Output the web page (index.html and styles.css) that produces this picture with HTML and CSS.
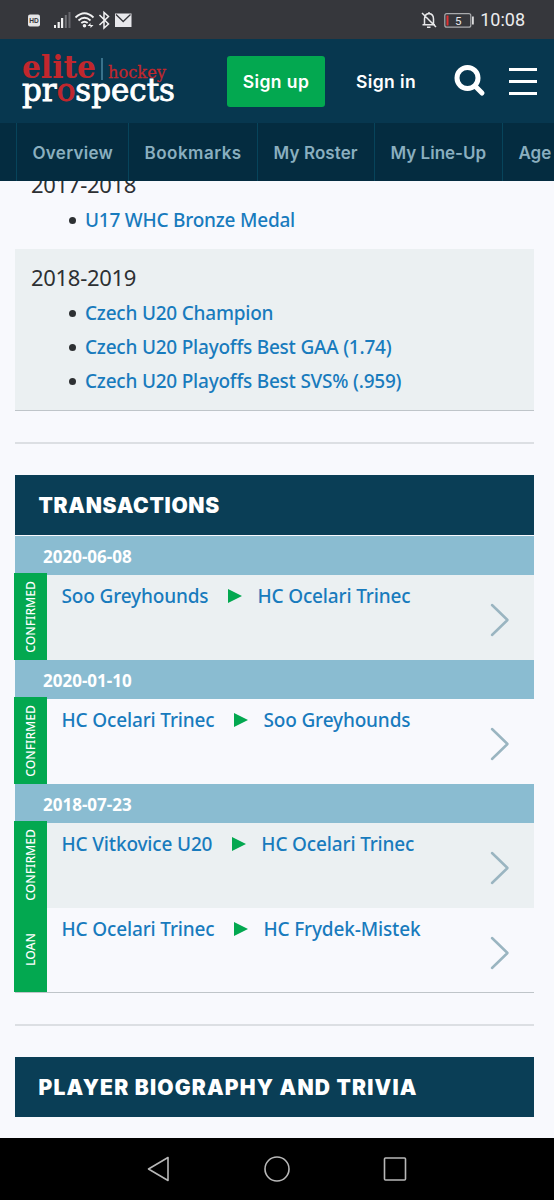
FILE: index.html
```html
<!DOCTYPE html>
<html lang="en">
<head>
    <meta charset="UTF-8">
    <meta name="viewport" content="width=device-width, initial-scale=1.0">
    <title>Elite Prospects</title>
    <link rel="stylesheet" href="styles.css">
</head>
<body>
    <div class="status-bar">
        <svg class="status-left" width="110" height="20" viewBox="26 9 110 20">
            <rect x="28" y="13.500" width="12" height="12" rx="2" fill="#e4e4e6"/>
            <text x="29.300" y="22.400" class="hd-text" textLength="9.500" lengthAdjust="spacingAndGlyphs">HD</text>
            <g fill="#f2f2f3">
                <rect x="54" y="24" width="2" height="3"/>
                <rect x="57.600" y="21" width="2.200" height="6"/>
                <rect x="61" y="17" width="2.200" height="10"/>
                <rect x="64.800" y="14" width="2" height="13" fill="#74757a"/>
                <rect x="68.500" y="11" width="2" height="16" fill="#66676c"/>
                <circle cx="84.500" cy="24.800" r="1.800"/>
                <path d="M87.500 25l3-3v2h3l-3 3v-2z"/>
            </g>
            <g fill="none" stroke="#f2f2f3" stroke-width="1.800">
                <path d="M75.500 16.500q9-8.500 18 0M78.500 19.500q6-5.500 12 0M81.300 22q3.200-2.600 6.400 0"/>
                <path d="M99.500 14l9 9-4.500 4V11.500l4.500 4-9 8.500" stroke-width="1.500"/>
            </g>
            <rect x="115" y="12.500" width="16.500" height="13.500" fill="#e8e8ec"/>
            <path d="M116 13.500l7.200 7 7.300-7" fill="none" stroke="#36373c" stroke-width="1.300"/>
        </svg>
        <div class="status-right">
            <svg width="54" height="20" viewBox="421 9 54 20">
                <path d="M425.500 23.500V18q0-5 4.500-5.500 4.500.5 4.500 5.500v5.500M423.500 23.800h12.500M428 26.200h3.500M423 12l14 14M430 11v2" fill="none" stroke="#e8e8ea" stroke-width="1.500"/>
                <rect x="445.800" y="12.700" width="26" height="13.500" rx="2" fill="none" stroke="#a9aaad" stroke-width="1.200"/>
                <rect x="447.500" y="14.500" width="2" height="10" fill="#e03232"/>
                <rect x="473" y="15.500" width="1.800" height="8" fill="#dcdcde"/>
                <text x="456" y="23.700" class="battery-text">5</text>
            </svg>
            <span class="clock">10:08</span>
        </div>
    </div>

    <header class="site-header">
        <svg class="logo" width="156" height="62" viewBox="21 50 156 62">
            <text x="22" y="78" class="logo-elite" textLength="74" lengthAdjust="spacingAndGlyphs">elite</text>
            <path d="M102 58v22" stroke="#5c9ab5" stroke-width="1.200"/>
            <text x="108" y="78" class="logo-hockey" textLength="58" lengthAdjust="spacingAndGlyphs">hockey</text>
            <text x="22" y="101" class="logo-prospects" textLength="153" lengthAdjust="spacingAndGlyphs">pr<tspan class="logo-o">o</tspan>spects</text>
        </svg>
        <a class="btn-signup">Sign up</a>
        <a class="signin">Sign in</a>
        <svg class="search" width="34" height="34" viewBox="0 0 34 34">
            <circle cx="14.500" cy="14" r="10.500" fill="none" stroke="#fff" stroke-width="5"/>
            <path d="M22 22l7 7" stroke="#fff" stroke-width="5" stroke-linecap="round"/>
        </svg>
        <div class="hamburger"><span></span><span></span><span></span></div>
    </header>

    <nav class="sub-nav">
        <a class="nav-overview">Overview</a>
        <a class="nav-bookmarks">Bookmarks</a>
        <a class="nav-roster">My Roster</a>
        <a class="nav-lineup">My Line-Up</a>
        <a class="nav-agency">Age</a>
    </nav>

    <main class="content">
        <section class="awards">
            <div class="season">
                <h3>2017-2018</h3>
                <ul>
                    <li><a>U17 WHC Bronze Medal</a></li>
                </ul>
            </div>
            <div class="season shaded">
                <h3>2018-2019</h3>
                <ul>
                    <li><a>Czech U20 Champion</a></li>
                    <li><a>Czech U20 Playoffs Best GAA (1.74)</a></li>
                    <li><a>Czech U20 Playoffs Best SVS% (.959)</a></li>
                </ul>
            </div>
        </section>

        <hr>

        <section class="transactions">
            <h2>Transactions</h2>
            <div class="date">2020-06-08</div>
            <div class="move shaded">
                <div class="label first"><span>CONFIRMED</span></div>
                <div class="teams"><a>Soo Greyhounds</a><i class="arrow"></i><a>HC Ocelari Trinec</a></div>
                <svg class="chevron" width="20" height="34" viewBox="0 0 20 34"><path d="M2 2l15.500 15L2 32"/></svg>
            </div>
            <div class="date">2020-01-10</div>
            <div class="move">
                <div class="label first"><span>CONFIRMED</span></div>
                <div class="teams"><a>HC Ocelari Trinec</a><i class="arrow"></i><a>Soo Greyhounds</a></div>
                <svg class="chevron" width="20" height="34" viewBox="0 0 20 34"><path d="M2 2l15.500 15L2 32"/></svg>
            </div>
            <div class="date">2018-07-23</div>
            <div class="move shaded">
                <div class="label first"><span>CONFIRMED</span></div>
                <div class="teams"><a>HC Vitkovice U20</a><i class="arrow"></i><a>HC Ocelari Trinec</a></div>
                <svg class="chevron" width="20" height="34" viewBox="0 0 20 34"><path d="M2 2l15.500 15L2 32"/></svg>
            </div>
            <div class="move">
                <div class="label"><span>LOAN</span></div>
                <div class="teams"><a>HC Ocelari Trinec</a><i class="arrow"></i><a>HC Frydek-Mistek</a></div>
                <svg class="chevron" width="20" height="34" viewBox="0 0 20 34"><path d="M2 2l15.500 15L2 32"/></svg>
            </div>
        </section>

        <hr>

        <section class="biography">
            <h2>Player Biography and Trivia</h2>
        </section>
    </main>

    <div class="android-nav">
        <svg width="26" height="28" viewBox="0 0 26 28"><path d="M2.500 14L22 2.500v23z"/></svg>
        <svg width="28" height="28" viewBox="0 0 28 28"><circle cx="14" cy="14" r="12"/></svg>
        <svg width="26" height="28" viewBox="0 0 26 28"><rect x="2.500" y="3" width="21" height="22" rx="1"/></svg>
    </div>
</body>
</html>
```

FILE: styles.css
```css
/* General Reset and Body Styling */
* {
    margin: 0;
    padding: 0;
    box-sizing: border-box;
}

body {
    font-family: 'Noto Sans', 'Open Sans', sans-serif;
    background-color: #f8f9fd;
    color: #2d3033;
    height: 1200px;
    display: flex;
    flex-direction: column;
    overflow: hidden;
}

svg {
    display: block;
    flex-shrink: 0;
}

/* Phone status bar */
.status-bar {
    height: 39px;
    flex-shrink: 0;
    background-color: #36373c;
    display: flex;
    justify-content: space-between;
    align-items: center;
    padding: 0 29px 0 26px;
}

.status-right {
    display: flex;
    align-items: center;
    gap: 6px;
}

.clock {
    font-family: Roboto, sans-serif;
    font-size: 18px;
    line-height: 20px;
    color: #ececee;
}

.hd-text {
    font: bold 7.5px 'Liberation Sans', sans-serif;
    fill: #36373c;
}

.battery-text {
    font: 11.5px Roboto, sans-serif;
    fill: #e8e8ea;
}

/* Header */
.site-header {
    height: 84px;
    flex-shrink: 0;
    background-color: #07374f;
    display: flex;
    align-items: center;
    padding: 0 17px 0 21px;
    font-family: Inter, sans-serif;
    font-size: 17.5px;
    letter-spacing: 0.4px;
    color: #fff;
}

.logo {
    letter-spacing: 0;
}

.logo-elite {
    font: bold 31px 'DejaVu Serif', serif;
    fill: #c1272d;
}

.logo-hockey {
    font: 16px 'DejaVu Serif', serif;
    fill: #c1272d;
    stroke: #c1272d;
    stroke-width: 0.3px;
}

.logo-prospects {
    font: 32px 'DejaVu Serif', serif;
    fill: #fff;
    stroke: #fff;
    stroke-width: 0.9px;
}

.logo-o {
    fill: #c1272d;
    stroke: #c1272d;
}

.btn-signup {
    width: 98px;
    height: 51px;
    line-height: 51px;
    margin-left: 50px;
    border-radius: 3px;
    background-color: #03a850;
    font-weight: 600;
    text-align: center;
}

.signin {
    width: 60px;
    margin-left: 31px;
    font-weight: 600;
    white-space: nowrap;
}

.search {
    margin-left: 37px;
}

.hamburger {
    width: 28px;
    height: 27px;
    margin-left: auto;
    display: flex;
    flex-direction: column;
    justify-content: space-between;
}

.hamburger span {
    height: 3px;
    background-color: #fff;
}

/* Sub navigation */
.sub-nav {
    height: 58px;
    flex-shrink: 0;
    background-color: #042c40;
    display: flex;
    padding-left: 16px;
    overflow: hidden;
    font-family: Inter, sans-serif;
    font-size: 17px;
    line-height: 60px;
    color: #8aafbf;
}

.sub-nav a {
    flex-shrink: 0;
    border-left: 1px solid #07445b;
    padding-left: 15.5px;
    font-weight: 600;
    white-space: nowrap;
}

.nav-overview {
    width: 112px;
    letter-spacing: 0.3px;
}

.nav-bookmarks {
    width: 129px;
    letter-spacing: 0.5px;
}

.nav-roster {
    width: 117px;
    letter-spacing: 0.1px;
}

.nav-lineup {
    width: 128px;
}

/* Content */
.content {
    flex: 1;
    overflow: hidden;
    padding: 0 20px 0 15px;
}

.shaded {
    background-color: #ebf0f2;
}

hr {
    border: none;
    height: 2px;
    margin: 31px 0;
    background-color: #dcdfe3;
}

/* Awards, scrolled partly under the navigation */
.awards {
    margin-top: -25px;
    border-bottom: 1px solid #bfc5c9;
}

.season {
    padding: 11px 16px 12px;
}

.season h3 {
    font-size: 22px;
    font-weight: 400;
    line-height: 34px;
    letter-spacing: -0.3px;
    margin-bottom: 2px;
}

.season ul {
    list-style: none;
    padding-left: 38px;
}

.season li {
    display: flex;
    align-items: center;
    font-size: 19px;
    line-height: 34px;
    letter-spacing: -0.22px;
}

.season li::before {
    content: "";
    width: 7px;
    height: 7px;
    margin-right: 9px;
    border-radius: 50%;
    background-color: #2d3033;
}

.season a,
.teams a {
    color: #187bbd;
    font-weight: 500;
}

/* Transactions */
h2 {
    height: 60px;
    line-height: 61px;
    padding-left: 23.5px;
    background-color: #0a3e56;
    color: #fff;
    font-family: Inter, sans-serif;
    font-weight: 900;
    font-size: 21px;
    letter-spacing: 0.7px;
    text-transform: uppercase;
    white-space: nowrap;
}

.biography h2 {
    letter-spacing: 1.18px;
}

.transactions {
    border-bottom: 1px solid #bfc5c9;
}

.transactions h2 {
    margin-bottom: 1px;
}

.date {
    height: 39px;
    line-height: 41px;
    padding-left: 28px;
    background-color: #8abcd1;
    color: #fff;
    font-weight: 700;
    font-size: 17px;
}

.move {
    height: 85px;
    display: flex;
    padding-right: 24px;
}

.move:last-child {
    height: 84px;
}

.label {
    width: 33px;
    margin-left: -1px;
    flex-shrink: 0;
    display: flex;
    align-items: center;
    justify-content: center;
    background-color: #03a850;
}

.label.first {
    margin-top: -2px;
}

.label span {
    writing-mode: vertical-rl;
    transform: rotate(180deg);
    font-size: 12.2px;
    font-weight: 500;
    line-height: 16px;
    color: #fff;
}

.teams {
    flex: 1;
    display: flex;
    height: 42px;
    padding-left: 14.5px;
    font-size: 19px;
    line-height: 42px;
    letter-spacing: -0.15px;
    white-space: nowrap;
}

.arrow {
    align-self: center;
    margin: 0 15px 0 20px;
    border-left: 14px solid #03a850;
    border-top: 7px solid transparent;
    border-bottom: 7px solid transparent;
}

.chevron {
    align-self: center;
    margin-top: 5px;
}

.chevron path {
    fill: none;
    stroke: #9ab5c1;
    stroke-width: 2.5px;
    stroke-linecap: round;
    stroke-linejoin: round;
}

/* Android navigation bar */
.android-nav {
    height: 62px;
    flex-shrink: 0;
    background-color: #000;
    display: flex;
    justify-content: center;
    align-items: center;
    gap: 91px;
}

.android-nav svg {
    fill: none;
    stroke: #b8b8b8;
    stroke-width: 1.6px;
    stroke-linejoin: round;
}
```
